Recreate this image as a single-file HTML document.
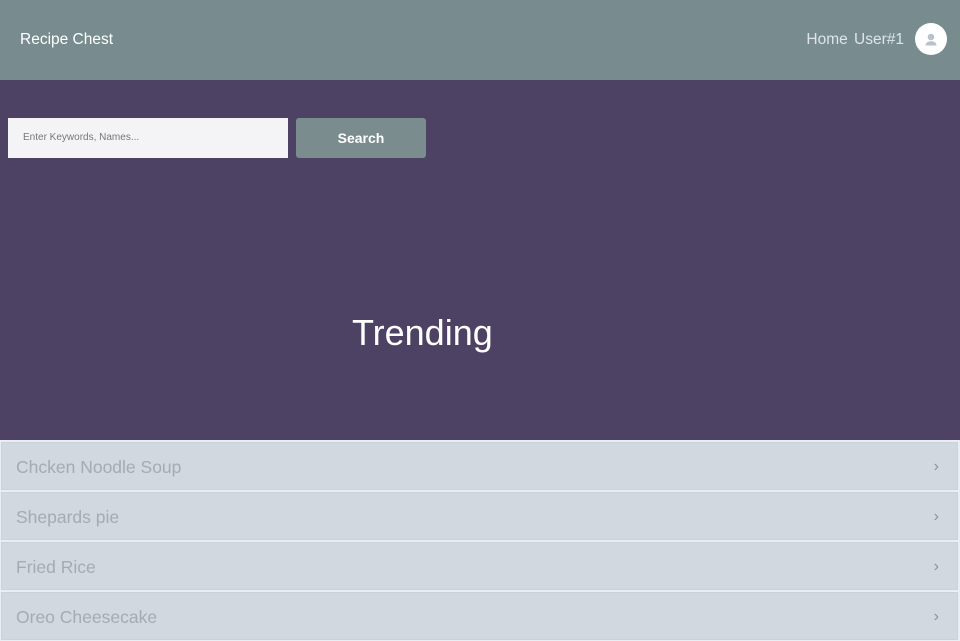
<!DOCTYPE html>
<html><head><style>
body{margin:0;width:960px;height:640px;overflow:hidden;font-family:"Liberation Sans",sans-serif;background:#e9eef2}
.hdr{position:absolute;left:0;top:0;width:960px;height:80px;background:#788c8f}
.brand{position:absolute;left:20px;top:31px;color:#fff;font-size:15.5px}
.nav{position:absolute;right:56px;top:31px;color:#dde5e8;font-size:15.5px;word-spacing:2px}
.av{position:absolute;left:915px;top:23px;width:32px;height:32px;border-radius:50%;background:#fff}
.hero{position:absolute;left:0;top:80px;width:960px;height:360px;background:#4d4264}
.inp{position:absolute;left:8px;top:118px;width:280px;height:40px;background:#f4f4f6;font-size:10px;color:#777;line-height:40px;box-sizing:border-box;padding-left:15px}
.btn{position:absolute;left:296px;top:118px;width:130px;height:40px;background:#7a8c8e;border-radius:3px;color:#fff;font-size:14px;font-weight:bold;text-align:center;line-height:40px}
.tr{position:absolute;left:352px;top:312px;color:#fff;font-size:36px}
.row{position:absolute;left:1px;width:957px;height:48px;background:#d1d8df;border:1px solid #cbd2da;color:#a3abb5;font-size:17.5px;line-height:48px;box-sizing:border-box;padding-left:14px}
.row span{position:absolute;right:18px;top:0;font-size:16px;color:#8a929c}
</style></head><body>
<div class="hdr"><div class="brand">Recipe Chest</div><div class="nav">Home User#1</div>
<div class="av"><svg width="32" height="32" viewBox="0 0 32 32"><circle cx="16" cy="14" r="3.3" fill="#b8c1cc"/><path d="M10.5 22.5c0-3.2 3-4.3 5.5-4.3s5.5 1.1 5.5 4.3z" fill="#b8c1cc"/></svg></div></div>
<div class="hero"></div>
<div class="inp">Enter Keywords, Names...</div>
<div class="btn">Search</div>
<div class="tr">Trending</div>
<div class="row" style="top:442px">Chcken Noodle Soup<span>›</span></div>
<div class="row" style="top:492px">Shepards pie<span>›</span></div>
<div class="row" style="top:542px">Fried Rice<span>›</span></div>
<div class="row" style="top:592px">Oreo Cheesecake<span>›</span></div>
</body></html>
